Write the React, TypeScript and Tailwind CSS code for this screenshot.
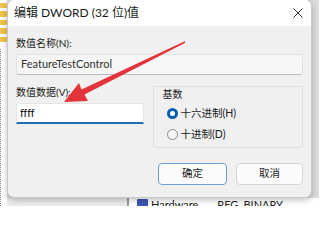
const font = "font-['Lato','Noto_Sans_CJK_SC',sans-serif]";

function Folder() {
  return <div className="h-[7px] w-[7px] rounded-[1px] bg-[#f2c14e]" />;
}

function Radio({ checked, label }: { checked: boolean; label: string }) {
  return (
    <div className="flex items-center gap-[3px]">
      {checked ? (
        <span className="flex h-[11px] w-[11px] items-center justify-center rounded-full bg-[#0a5fb4]">
          <span className="h-[5px] w-[5px] rounded-full bg-white" />
        </span>
      ) : (
        <span className="h-[11px] w-[11px] rounded-full border border-[#8a8a8a] bg-[#f7f7f7]" />
      )}
      <span className="text-[10.5px] leading-none text-[#1b1b1b]">{label}</span>
    </div>
  );
}

function Arrow() {
  return (
    <svg className="pointer-events-none absolute left-0 top-0" width="319" height="206">
      <polygon
        points="64,102 88,101 84.5,94.5 185.3,42.7 184.7,41.3 81.5,89.5 79,83"
        fill="#e3343c"
      />
    </svg>
  );
}

export default function App() {
  return (
    <div className={`relative h-[206px] w-[319px] overflow-hidden bg-[#dcdcdc] ${font}`}>
      {/* regedit behind the dialog */}
      <div className="flex h-full">
        <div className="flex w-[7px] flex-col gap-[3px] bg-white pt-[3px]">
          <Folder />
          <Folder />
          <Folder />
          <Folder />
          <Folder />
          <div className="mt-[4px] h-full w-[2px] border-l border-dotted border-[#888]" />
        </div>
        <div className="flex flex-1 flex-col justify-end">
          <div className="flex h-[8px] items-start bg-white">
            <div className="h-full w-[120px] bg-[#ececec]" />
            <div className="h-full w-[2px] bg-[#9a9a9a]" />
            <div className="flex items-start gap-[3px] pl-[8px] text-[11px] leading-none text-[#222]">
              <span className="mt-[1px] h-[9px] w-[11px] rounded-[1px] bg-[#3e56b5]" />
              <span className="mt-[1px]">Hardware</span>
              <span className="ml-[16px] mt-[1px]">REG_BINARY</span>
            </div>
          </div>
        </div>
      </div>

      {/* dialog window */}
      <div className="absolute left-[7px] top-[-1px] flex h-[199px] w-[305px] flex-col overflow-hidden rounded-[7px] border border-[#c9c9c9] bg-[#f0f0f0] shadow-[0_2px_6px_rgba(0,0,0,0.25)]">
        <div className="flex h-[26px] items-center justify-between bg-white pl-[6px] pr-[8px]">
          <span className="text-[12px] text-[#1a1a1a]">编辑 DWORD (32 位)值</span>
          <svg width="10" height="10" viewBox="0 0 10 10">
            <path d="M0.5 0.5 L9.5 9.5 M9.5 0.5 L0.5 9.5" stroke="#333" strokeWidth="1" />
          </svg>
        </div>

        <div className="flex flex-col px-[8px] pt-[10px]">
          <span className="text-[10px] leading-[14px] text-[#1b1b1b]">数值名称(N):</span>
          <div className="mt-[4px] flex h-[21px] items-center rounded-[3px] border border-[#e2e2e2] border-b-[#bdbdbd] bg-[#f6f6f6] px-[4px] text-[11px] text-[#333]">
            FeatureTestControl
          </div>

          <div className="mt-[11px] flex gap-[9px]">
            <div className="flex w-[129px] flex-col">
              <span className="text-[10px] leading-[13px] text-[#1b1b1b]">数值数据(V):</span>
              <div className="mt-[4px] flex h-[21px] items-center rounded-t-[3px] border border-[#e5e5e5] border-b-2 border-b-[#1f6fb4] bg-white px-[3px] text-[11px] text-[#111]">
                ffff
              </div>
            </div>
            <div className="flex h-[62px] w-[152px] flex-col rounded-[3px] border border-[#e0e0e0] px-[9px]">
              <span className="text-[10px] leading-[14px] text-[#1b1b1b]">基数</span>
              <div className="mt-[7px] flex flex-col gap-[10px] pl-[4px]">
                <Radio checked label="十六进制(H)" />
                <Radio checked={false} label="十进制(D)" />
              </div>
            </div>
          </div>

          <div className="mt-[15px] flex justify-end gap-[9px]">
            <div className="flex h-[22px] w-[69px] items-center justify-center rounded-[4px] border border-[#6f9ed0] bg-[#fbfbfb] text-[10.5px] text-[#1b1b1b]">
              确定
            </div>
            <div className="flex h-[22px] w-[67px] items-center justify-center rounded-[4px] border border-[#d5d5d5] bg-[#fbfbfb] text-[10.5px] text-[#1b1b1b]">
              取消
            </div>
          </div>
        </div>
      </div>

      <Arrow />
    </div>
  );
}
